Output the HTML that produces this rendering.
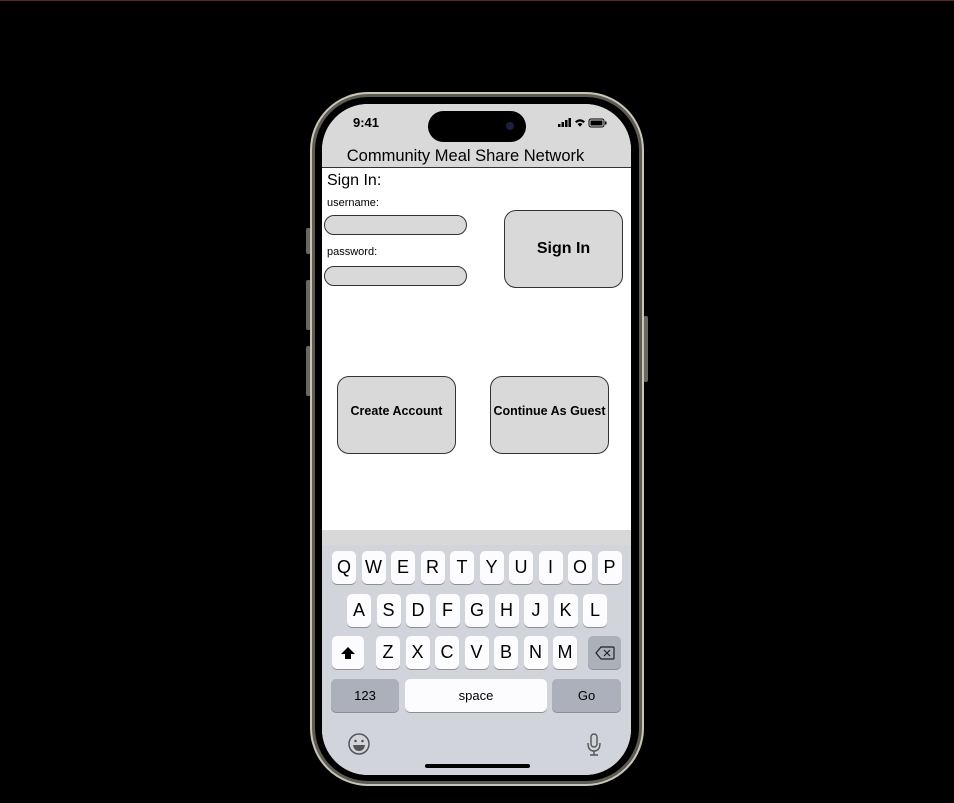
<!DOCTYPE html>
<html><head><style>
*{margin:0;padding:0;box-sizing:border-box}
body{width:954px;height:803px;background:#000;position:relative;overflow:hidden;font-family:"Liberation Sans",sans-serif}
.abs{position:absolute}
.frame{left:310px;top:92px;width:334px;height:694px;border-radius:58px;background:#8a887c;border:2px solid #c9c6b8;box-shadow:inset 0 0 0 3px #5d5b52}
.inner{left:315px;top:97px;width:324px;height:684px;border-radius:53px;background:#000}
.screen{left:322px;top:104px;width:309px;height:671px;border-radius:46px;background:#fff;overflow:hidden}
.key{position:absolute;width:24px;height:33px;background:#fcfcfe;border-radius:5px;box-shadow:0 1px 0 #8d8f94;font-size:18px;text-align:center;line-height:33px;color:#000}
.dk{background:#abb0ba}
.btn{position:absolute;background:#d9d9d9;border:1px solid #333;border-radius:12px;font-weight:bold;text-align:center;color:#000}
.inp{position:absolute;left:2px;width:143px;height:20px;background:#d9d9d9;border:1px solid #333;border-radius:10px}
</style></head><body>
<div class="abs" style="left:0;top:0;width:954px;height:1px;background:#5a2a1a"></div>
<div class="abs" style="left:306px;top:228px;width:5px;height:26px;background:#6a685f;border-radius:2px"></div>
<div class="abs" style="left:306px;top:280px;width:5px;height:50px;background:#6a685f;border-radius:2px"></div>
<div class="abs" style="left:306px;top:346px;width:5px;height:50px;background:#6a685f;border-radius:2px"></div>
<div class="abs" style="left:643px;top:316px;width:5px;height:66px;background:#6a685f;border-radius:2px"></div>
<div class="abs frame"></div>
<div class="abs inner"></div>
<div class="abs screen">
  <div class="abs" style="left:0;top:0;width:309px;height:64px;background:#d9d9d9;border-bottom:1px solid #333"></div>
  <div class="abs" style="left:31px;top:11px;font-size:13px;font-weight:bold">9:41</div>
  <div class="abs" style="left:106px;top:7px;width:98px;height:31px;background:#000;border-radius:16px"></div>
  <div class="abs" style="left:184px;top:18px;width:8px;height:8px;background:#1b2040;border-radius:50%"></div>
  <svg class="abs" style="left:236px;top:13px" width="50" height="12" viewBox="0 0 50 12">
    <rect x="0" y="7" width="2.5" height="3" fill="#000"/><rect x="3.5" y="5" width="2.5" height="5" fill="#000"/><rect x="7" y="3" width="2.5" height="7" fill="#000"/><rect x="10.5" y="1" width="2.5" height="9" fill="#000"/>
    <path d="M17 4.5 Q22 0 27 4.5 L25.5 6 Q22 3 18.5 6Z M19.5 7 Q22 5 24.5 7 L22 9.8Z" fill="#000"/>
    <rect x="31" y="2" width="15" height="8" rx="2" fill="none" stroke="#000" stroke-width="1"/><rect x="32.5" y="3.5" width="12" height="5" fill="#000"/><rect x="47" y="4.5" width="1.5" height="3" fill="#000"/>
  </svg>
  <div class="abs" style="left:-11px;top:43px;width:309px;text-align:center;font-size:16.5px">Community Meal Share Network</div>
  <div class="abs" style="left:5px;top:68px;font-size:16px">Sign In:</div>
  <div class="abs" style="left:5px;top:93px;font-size:11px">username:</div>
  <div class="inp" style="top:111px"></div>
  <div class="abs" style="left:5px;top:142px;font-size:11px">password:</div>
  <div class="inp" style="top:162px"></div>
  <div class="btn" style="left:182px;top:106px;width:119px;height:78px;line-height:76px;font-size:16px">Sign In</div>
  <div class="btn" style="left:15px;top:272px;width:119px;height:78px;line-height:68px;font-size:12.5px">Create Account</div>
  <div class="btn" style="left:168px;top:272px;width:119px;height:78px;line-height:68px;font-size:12.5px">Continue As Guest</div>
  <div class="abs" style="left:0;top:426px;width:309px;height:250px;background:#d1d4da"></div>
  <div class="abs" style="left:0;top:426px;width:309px;height:15px;background:#d8d8d8"></div>
</div>
<div id="kb"></div>
<script>
var kb=document.getElementById('kb'),h='';
function k(x,y,t,w,cls,fs){h+='<div class="key '+(cls||'')+'" style="left:'+x+'px;top:'+y+'px;width:'+(w||24)+'px;'+(fs?'font-size:'+fs+'px':'')+'">'+t+'</div>';}
'QWERTYUIOP'.split('').forEach(function(c,i){k(332+i*29.5,551,c)});
'ASDFGHJKL'.split('').forEach(function(c,i){k(347+i*29.5,594,c)});
'ZXCVBNM'.split('').forEach(function(c,i){k(376+i*29.5,636,c)});
k(332,636,'<svg width="16" height="16" viewBox="0 0 16 16" style="vertical-align:middle"><path d="M8 2 L15 9 L11 9 L11 14 L5 14 L5 9 L1 9Z" fill="#000"/></svg>',32);
k(588,636,'<svg width="20" height="14" viewBox="0 0 20 14" style="vertical-align:middle"><path d="M6 1 H18 a1 1 0 0 1 1 1 V12 a1 1 0 0 1 -1 1 H6 L1 7Z" fill="none" stroke="#222" stroke-width="1.2"/><path d="M9 4 L15 10 M15 4 L9 10" stroke="#222" stroke-width="1.2"/></svg>',33,'dk');
k(331,679,'123',68,'dk',13);
k(405,679,'space',142,'',13);
k(552,679,'Go',69,'dk',13);
kb.innerHTML=h;
</script>
<svg class="abs" style="left:347px;top:732px" width="24" height="24" viewBox="0 0 24 24"><circle cx="12" cy="12" r="10" fill="none" stroke="#555" stroke-width="1.5"/><circle cx="8.5" cy="9" r="1.3" fill="#555"/><circle cx="15.5" cy="9" r="1.3" fill="#555"/><path d="M6 13 H18 Q17 19 12 19 Q7 19 6 13Z" fill="#555"/></svg>
<svg class="abs" style="left:586px;top:733px" width="16" height="24" viewBox="0 0 16 24"><rect x="5" y="1" width="6" height="13" rx="3" fill="none" stroke="#555" stroke-width="1.4"/><path d="M2 10 Q2 18 8 18 Q14 18 14 10 M8 18 V22 M4 22 H12" fill="none" stroke="#555" stroke-width="1.4"/></svg>
<div class="abs" style="left:425px;top:764px;width:105px;height:4px;background:#000;border-radius:2px"></div>
</body></html>
